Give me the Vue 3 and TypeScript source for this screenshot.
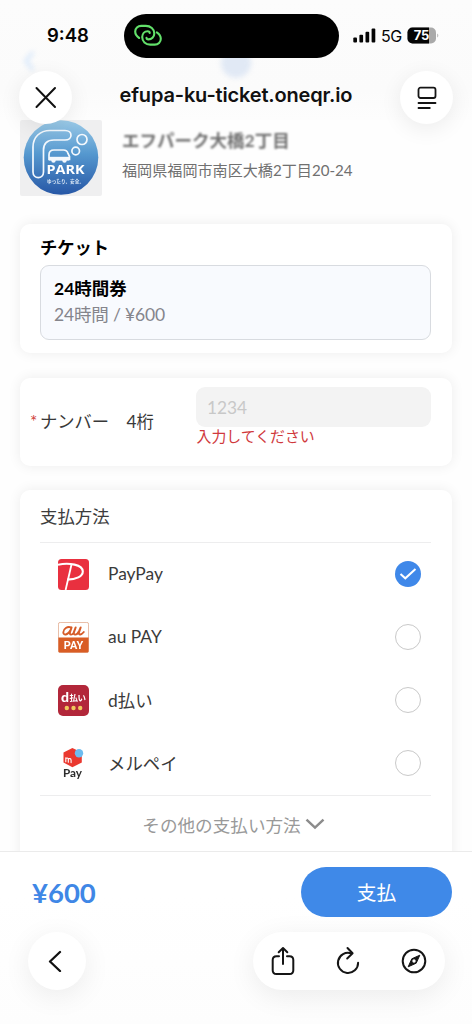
<script setup lang="ts">
import { ref } from 'vue'

interface Method {
  id: string
  label: string
}

const methods: Method[] = [
  { id: 'paypay', label: 'PayPay' },
  { id: 'aupay', label: 'au PAY' },
  { id: 'dpay', label: 'd払い' },
  { id: 'merpay', label: 'メルペイ' },
]
const selected = ref<string>('paypay')
</script>

<template>
  <div class="screen">
    <header class="chrome">
      <div class="status">
        <span class="time">9:48</span>
        <div class="island">
          <svg width="28" height="24" viewBox="0 0 28 24" fill="none" stroke="#62e06a" stroke-width="2.1" stroke-linecap="round">
            <path d="M5.200 14C2.800 12.500 1.200 10 1.200 7.600C1.200 4.300 3.800 1.900 7.200 1.900H11.800C16.500 1.900 20.300 5.200 20.300 9.400C20.300 12.800 17.600 15.400 14.400 15.400C13.300 15.400 12.500 14.800 12.500 13.800" />
            <path d="M22.800 8.300C25.200 9.800 26.800 12.300 26.800 14.700C26.800 18 24.200 20.600 20.800 20.600H16.200C11.500 20.600 8.200 17.300 8.200 13.100C8.200 9.700 10.500 7.200 13.600 7.200C14.900 7.200 15.700 7.900 15.700 8.900" />
          </svg>
        </div>
        <div class="indicators">
          <svg width="23" height="15" viewBox="0 0 23 15" fill="#050505">
            <rect x="0.300" y="9.500" width="3.700" height="5" rx="1" />
            <rect x="6.400" y="6.700" width="3.700" height="7.800" rx="1" />
            <rect x="12.500" y="3.700" width="3.700" height="10.800" rx="1" />
            <rect x="18.600" y="0.500" width="3.700" height="14" rx="1" />
          </svg>
          <span class="net">5G</span>
          <svg width="32" height="17" viewBox="0 0 32 17">
            <defs>
              <clipPath id="cell"><rect x="0.500" y="0.500" width="28.500" height="16" rx="5" /></clipPath>
            </defs>
            <g clip-path="url(#cell)">
              <rect width="30" height="17" fill="#a9a9a9" />
              <rect width="22" height="17" fill="#050505" />
            </g>
            <path d="M30.300 6.500C31.600 7 31.600 10 30.300 10.500Z" fill="#a9a9a9" />
            <text x="14.500" y="13.200" text-anchor="middle" class="battery-text">75</text>
          </svg>
        </div>
      </div>
      <div class="nav">
        <button class="round" aria-label="閉じる">
          <svg width="24" height="24" viewBox="0 0 24 24" fill="none" stroke="#111" stroke-width="2" stroke-linecap="round">
            <path d="M2.500 2L21 21M21 2L2.500 21" />
          </svg>
        </button>
        <span class="host">efupa-ku-ticket.oneqr.io</span>
        <button class="round" aria-label="ページメニュー">
          <svg width="20" height="24" viewBox="0 0 20 24" fill="none" stroke="#151515" stroke-width="1.800" stroke-linecap="round">
            <rect x="1.500" y="1.700" width="17" height="10.300" rx="2" />
            <path d="M1.500 17H18.500M1.500 22H12.800" />
          </svg>
        </button>
      </div>
      <svg class="ghost" width="472" height="130" viewBox="0 0 472 130">
        <path d="M33 52L26 61L33 70" fill="none" stroke="#d8e8fb" stroke-width="3.500" />
        <circle cx="236" cy="63" r="15" fill="#e1e9f5" />
      </svg>
    </header>

    <main class="content">
      <section class="shop">
        <svg class="shop-logo" width="82" height="76" viewBox="0 0 82 76">
          <defs>
            <linearGradient id="sky" x1="0" y1="0" x2="0" y2="1">
              <stop offset="0" stop-color="#9ccbe8" />
              <stop offset="0.450" stop-color="#5598cf" />
              <stop offset="1" stop-color="#2757a6" />
            </linearGradient>
          </defs>
          <rect width="82" height="76" rx="2" fill="#efeff0" />
          <circle cx="41" cy="37.500" r="37.300" fill="url(#sky)" />
          <g fill="none" stroke="#f3f8fd" stroke-width="1.700">
            <path d="M13 52V27C13 17 20 10.500 30 10.500H45C53 10.500 53 20 45 20H34C27 20 23.500 23.500 23.500 30V52C23.500 59.500 13 59.500 13 52Z" />
            <circle cx="62" cy="19.500" r="5" />
            <circle cx="55.700" cy="31" r="3.800" />
            <path d="M29 38.500V35C29 31.500 31 30 34 30H43.500C46 30 47.300 31 48 33.500L49.500 36.500V39.500H29Z" />
          </g>
          <path d="M29 36.800H49V40.500H29Z" fill="#f3f8fd" />
          <circle cx="33.500" cy="40.500" r="2.200" fill="#f3f8fd" />
          <circle cx="44.500" cy="40.500" r="2.200" fill="#f3f8fd" />
          <text x="26.500" y="54.300" class="park" textLength="38" lengthAdjust="spacingAndGlyphs">PARK</text>
          <text x="27" y="62.500" class="park-sub" textLength="37">ゆったり、安全。</text>
        </svg>
        <div class="shop-info">
          <h1 class="shop-name">エフパーク大橋2丁目</h1>
          <p class="shop-address">福岡県福岡市南区大橋2丁目20-24</p>
        </div>
      </section>

      <section class="card ticket-card">
        <h2 class="ticket-title">チケット</h2>
        <div class="ticket">
          <strong>24時間券</strong>
          <span>24時間 / ¥600</span>
        </div>
      </section>

      <section class="card number-card">
        <label class="number-label" for="plate"><i>*</i>ナンバー　4桁</label>
        <div class="number-field">
          <input id="plate" class="plate" placeholder="1234" />
          <p class="error">入力してください</p>
        </div>
      </section>

      <section class="card pay-card">
        <h2 class="pay-title">支払方法</h2>
        <ul class="methods">
          <li v-for="m in methods" :key="m.id" class="method" @click="selected = m.id">
            <svg v-if="m.id === 'paypay'" class="brand" width="31" height="31" viewBox="0 0 31 31">
              <rect width="31" height="31" rx="3.500" fill="#e9303f" />
              <path d="M0 5.700C11 3.300 24.800 5.600 24.800 12.500C24.800 17.500 18 20.500 9.300 20.600" fill="none" stroke="#fff" stroke-width="2.100" />
              <path d="M13.500 5.500L7.600 31" fill="none" stroke="#fff" stroke-width="1.800" />
            </svg>
            <svg v-else-if="m.id === 'aupay'" class="brand" width="31" height="31" viewBox="0 0 31 31">
              <rect x="0.400" y="0.400" width="30.200" height="30.200" rx="1.800" fill="#fff" stroke="#dfa587" stroke-width="0.800" />
              <path d="M0.400 15.500H30.600V29Q30.600 30.600 29 30.600H2Q0.400 30.600 0.400 29Z" fill="#d95d25" />
              <g fill="none" stroke="#d65c28" stroke-width="1.900" stroke-linecap="round" stroke-linejoin="round">
                <path d="M13 5.400C9.500 3.800 5.300 6.800 5.300 10.200C5.300 13.800 9.700 13.300 12.300 8.500L13.600 5.400L12 10.300C11.300 13.300 14 13.200 15.500 10.900L17.700 5.400L16 10.200C15 13.600 18.800 13.500 21 9.200L22.700 5.400L21 10.400C20.300 13.300 23.300 13.100 25.800 10" />
              </g>
              <text x="15.500" y="27" text-anchor="middle" class="au-pay" textLength="19.500" lengthAdjust="spacingAndGlyphs">PAY</text>
            </svg>
            <svg v-else-if="m.id === 'dpay'" class="brand" width="31" height="31" viewBox="0 0 31 31">
              <rect width="31" height="31" rx="5" fill="#b2273a" />
              <text x="3" y="16.800" class="d-letter">d</text>
              <text x="11.500" y="16" class="d-rest" textLength="16.500">払い</text>
              <g fill="#f0c95c">
                <circle cx="8.800" cy="23" r="2.200" />
                <circle cx="15.500" cy="23" r="2.200" />
                <circle cx="22.200" cy="23" r="2.200" />
              </g>
            </svg>
            <svg v-else class="brand" width="31" height="31" viewBox="0 0 31 31">
              <path d="M14.400 0L23.800 4.400V14.600L14.400 19.200L5.500 14.600V4.400Z" fill="#ea382f" />
              <circle cx="21" cy="5.200" r="4.200" fill="#6dbcf0" />
              <path d="M7.800 13.700V9.700M7.800 10.900C8.400 9.500 10.300 9.800 10.300 11.400V14.200M10.300 11.400C11.200 9.900 13.100 10.600 13.100 12.200V14.600" fill="none" stroke="#fff" stroke-width="1.100" stroke-linecap="round" />
              <text x="14.500" y="28.600" text-anchor="middle" class="mer-pay" textLength="19" lengthAdjust="spacingAndGlyphs">Pay</text>
            </svg>
            <span class="method-name">{{ m.label }}</span>
            <span class="radio" :class="{ on: selected === m.id }">
              <svg v-if="selected === m.id" width="26" height="26" viewBox="0 0 26 26" fill="none" stroke="#fff" stroke-width="2">
                <path d="M5.500 13L10.300 17.300L20.500 8" />
              </svg>
            </span>
          </li>
        </ul>
        <div class="more">
          <span>その他の支払い方法</span>
          <svg width="20" height="12" viewBox="0 0 20 12" fill="none" stroke="#8c8c8c" stroke-width="2.500">
            <path d="M1.500 1.700L10 9.600L18.500 1.700" />
          </svg>
        </div>
      </section>
    </main>

    <footer class="bottom">
      <div class="checkout">
        <span class="price">¥600</span>
        <button class="pay">支払</button>
      </div>
      <div class="toolbar">
        <button class="back" aria-label="戻る">
          <svg width="14" height="22" viewBox="0 0 14 22" fill="none" stroke="#111" stroke-width="2.300" stroke-linecap="round" stroke-linejoin="round">
            <path d="M12 2L2 11.500L12 21" />
          </svg>
        </button>
        <div class="tools">
          <svg width="24" height="30" viewBox="0 0 24 30" fill="none" stroke="#151515" stroke-width="2" stroke-linecap="round" stroke-linejoin="round">
            <path d="M8 10.200H5.500C3 10.200 1.700 11.500 1.700 14V24.200C1.700 26.700 3 28 5.500 28H18.500C21 28 22.300 26.700 22.300 24.200V14C22.300 11.500 21 10.200 18.500 10.200H16" />
            <path d="M12 18V2M7.700 6.200L12 2L16.300 6.200" />
          </svg>
          <svg width="24" height="30" viewBox="0 0 24 30" fill="none" stroke="#151515" stroke-width="2" stroke-linecap="round" stroke-linejoin="round">
            <path d="M15.300 7.300A10.100 10.100 0 1 0 22.100 16.700" />
            <path d="M11.500 2L16.600 7.300L11.200 12.500" />
          </svg>
          <svg width="26" height="26" viewBox="0 0 26 26" fill="none" stroke="#151515" stroke-width="2">
            <circle cx="13" cy="13" r="11.300" />
            <path d="M18.800 7.200L15.200 15.200L7.200 18.800L10.800 10.800Z" fill="#151515" stroke-width="1" stroke-linejoin="round" />
            <circle cx="13" cy="13" r="1.700" fill="#fff" stroke="none" />
          </svg>
        </div>
      </div>
    </footer>
  </div>
</template>

<style>
html,
body {
  margin: 0;
  background: #fefefe;
}
</style>

<style scoped>
* {
  box-sizing: border-box;
}
.screen {
  width: 472px;
  height: 1024px;
  display: flex;
  flex-direction: column;
  overflow: hidden;
  background: #fefefe;
  color: #333;
  font-family: Lato, 'Noto Sans CJK JP', sans-serif;
}
h1,
h2,
p,
ul {
  margin: 0;
  padding: 0;
}
button {
  border: 0;
  padding: 0;
  font-family: inherit;
}
.chrome {
  position: relative;
  z-index: 2;
  flex: none;
  height: 120px;
  background: linear-gradient(#fcfcfc, #fbfbfb 75%, #fdfdfd);
}
.ghost {
  position: absolute;
  left: 0;
  top: 0;
  z-index: -1;
  filter: blur(2.5px);
}
.status {
  display: flex;
  height: 71px;
  padding-top: 14px;
  font-family: Inter, sans-serif;
  color: #050505;
}
.time {
  width: 77px;
  margin-left: 47px;
  line-height: 43px;
  font-size: 18.5px;
  font-weight: 600;
}
.island {
  width: 215px;
  height: 44px;
  border-radius: 22px;
  background: #000;
  padding: 10px 0 0 10px;
}
.indicators {
  display: flex;
  align-items: center;
  height: 43px;
  margin-left: 14px;
}
.net {
  width: 31px;
  padding-left: 5px;
  font-size: 16px;
  letter-spacing: -0.5px;
}
.battery-text {
  font: 700 13px Inter, sans-serif;
  fill: #fff;
}
.nav {
  display: flex;
  align-items: flex-start;
  justify-content: space-between;
  padding: 0 19px;
}
.round {
  display: flex;
  align-items: center;
  justify-content: center;
  width: 53px;
  height: 53px;
  border-radius: 50%;
  background: #fff;
  box-shadow: 0 5px 22px rgba(0, 0, 0, 0.075);
}
.host {
  font: 600 20px/49px Inter, sans-serif;
  letter-spacing: -0.17px;
  color: #111;
  white-space: nowrap;
}
.content {
  flex: none;
  height: 731px;
  overflow: hidden;
  padding: 0 20px;
}
.shop {
  display: flex;
  height: 104px;
}
.shop-logo {
  display: block;
  filter: blur(0.35px);
}
.park {
  font: 700 12px 'Open Sans', sans-serif;
  fill: #fff;
}
.park-sub {
  font: 700 4.6px/1 'Noto Sans CJK JP', sans-serif;
  fill: #dce8f6;
}
.shop-info {
  margin-left: 20px;
  padding-top: 8px;
  white-space: nowrap;
}
.shop-name {
  font-size: 17.5px;
  line-height: 26px;
  font-weight: 700;
  color: #707070;
  filter: blur(0.8px);
}
.shop-address {
  margin-top: 4px;
  font-size: 15.1px;
  line-height: 24px;
  color: #707070;
}
.card {
  border-radius: 10px;
  background: #fff;
  box-shadow: 0 0 13px rgba(0, 0, 0, 0.075);
}
.ticket-card {
  height: 129px;
  padding: 10px 21px 0 20px;
}
.ticket-title {
  height: 30.5px;
  line-height: 28px;
  font-size: 17.3px;
  font-weight: 700;
  color: #000;
}
.ticket {
  display: flex;
  flex-direction: column;
  height: 75px;
  padding: 10px 13px;
  border: 1.5px solid #d8dbe0;
  border-radius: 9px;
  background: #f8fafe;
  line-height: 26.5px;
  font-size: 17.5px;
}
.ticket strong {
  color: #000;
}
.ticket span {
  color: #85858c;
  letter-spacing: -0.15px;
}
.number-card {
  display: flex;
  height: 88px;
  margin-top: 25px;
  padding: 9px 21px 0 10px;
}
.number-label {
  width: 166px;
  line-height: 70px;
  font-size: 17.3px;
  color: #383838;
  white-space: nowrap;
}
.number-label i {
  display: inline-block;
  width: 10px;
  color: #cf3f3b;
  font-style: normal;
}
.number-field {
  width: 235px;
}
.plate {
  display: block;
  width: 235px;
  height: 40px;
  padding: 0 11px;
  border: 0;
  border-radius: 9px;
  background: #f3f3f3;
  font: 17.3px Lato, sans-serif;
}
.plate::placeholder {
  color: #c8c8c8;
}
.error {
  padding-left: 0.5px;
  font-size: 14.9px;
  line-height: 19px;
  color: #d0393d;
}
.pay-card {
  height: 400px;
  margin-top: 24px;
  padding: 0 21px 0 20px;
}
.pay-title {
  height: 51.5px;
  line-height: 53px;
  font-size: 17.4px;
  font-weight: 400;
  color: #3c3c3c;
}
.methods {
  list-style: none;
  border-top: 1.5px solid #ededee;
  border-bottom: 1.5px solid #ededee;
}
.method {
  display: flex;
  align-items: center;
  height: 63px;
  padding: 0 10.5px 0 18px;
}
.brand {
  filter: blur(0.2px);
}
.au-pay {
  font: 700 11.5px Roboto, sans-serif;
  fill: #fff;
}
.d-letter {
  font: 900 14px Lato, sans-serif;
  fill: #fff;
}
.d-rest {
  font: 700 8.5px 'Noto Sans CJK JP', sans-serif;
  fill: #fff;
}
.mer-pay {
  font: 700 11.5px Lato, sans-serif;
  fill: #2c2c2c;
}
.method-name {
  flex: 1;
  margin-left: 19px;
  padding-bottom: 1px;
  font-size: 17.4px;
  color: #3a3a3a;
}
.radio {
  width: 26px;
  height: 26px;
  border: 1.3px solid #c9c9c9;
  border-radius: 50%;
}
.radio.on {
  border: 0;
  background: #3f88e9;
}
.radio svg {
  display: block;
}
.more {
  display: flex;
  align-items: center;
  justify-content: center;
  gap: 4px;
  height: 57px;
  padding-right: 4px;
  font-size: 17.6px;
  color: #999;
}
.bottom {
  position: relative;
  z-index: 2;
  flex: 1;
  border-top: 1.5px solid #ebebeb;
  background: linear-gradient(#fff 45px, #fdfdfd);
}
.checkout {
  display: flex;
  justify-content: space-between;
  align-items: center;
  height: 50px;
  margin: 15px 20px 0 32px;
}
.price {
  font-size: 27.5px;
  font-weight: 700;
  color: #3f87e6;
}
.pay {
  width: 151px;
  height: 50px;
  padding-bottom: 2px;
  border-radius: 25px;
  background: #3f89e8;
  color: #fff;
  font-size: 19.8px;
  font-weight: 400;
}
.toolbar {
  display: flex;
  justify-content: space-between;
  margin: 15px 27px 0 28px;
}
.back,
.tools {
  display: flex;
  align-items: center;
  height: 58px;
  border-radius: 29px;
  background: #fff;
  box-shadow: 0 6px 28px rgba(0, 0, 0, 0.075);
}
.back {
  justify-content: center;
  width: 58px;
  padding-right: 4px;
}
.tools {
  justify-content: space-between;
  width: 192px;
  padding: 0 18px;
}
</style>
